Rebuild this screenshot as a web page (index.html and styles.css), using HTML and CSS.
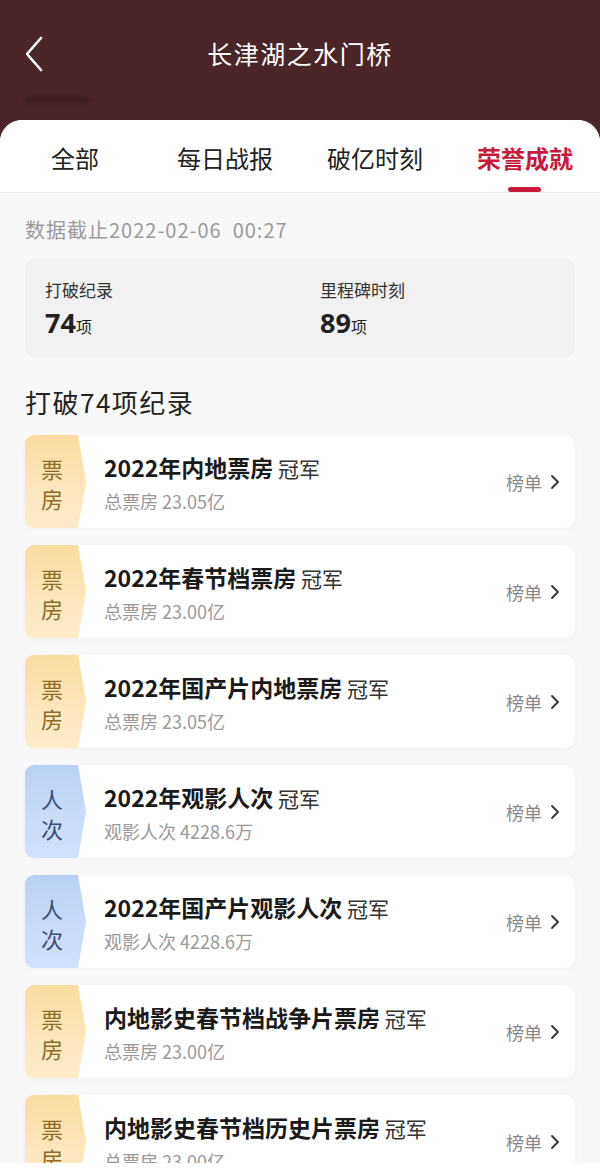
FILE: index.html
```html
<!DOCTYPE html>
<html lang="zh-CN">

<head>
  <meta charset="UTF-8">
  <meta name="viewport" content="width=device-width, initial-scale=1.0">
  <title>长津湖之水门桥</title>
  <link rel="stylesheet" href="styles.css">
</head>

<body>
  <div id="app">
    <div class="header">
      <div class="nav">
        <svg class="back" width="24" height="40" viewBox="0 0 24 40">
          <polyline points="18,4 4,20 18,36" fill="none" stroke="#ffffff" stroke-width="2.6" stroke-linecap="round" stroke-linejoin="round" />
        </svg>
        <div class="nav-title">长津湖之水门桥</div>
      </div>
      <div class="smudge"></div>
    </div>

    <div class="sheet">
      <ul class="tabs">
        <li>全部</li>
        <li>每日战报</li>
        <li>破亿时刻</li>
        <li class="active">荣誉成就</li>
      </ul>

      <div class="content">
        <p class="update">数据截止2022-02-06&nbsp;&nbsp;00:27</p>

        <div class="stats">
          <div class="stat">
            <div class="stat-label">打破纪录</div>
            <div class="stat-value"><b>74</b>项</div>
          </div>
          <div class="stat">
            <div class="stat-label">里程碑时刻</div>
            <div class="stat-value"><b>89</b>项</div>
          </div>
        </div>

        <h2 class="section-title">打破74项纪录</h2>

        <ul class="records">
          <li class="record">
            <div class="tag tag-box">票<br>房</div>
            <div class="record-info">
              <div class="record-name"><b>2022年内地票房</b> 冠军</div>
              <div class="record-sub">总票房 23.05亿</div>
            </div>
            <div class="record-link">榜单 <svg width="10" height="16" viewBox="0 0 10 16"><polyline points="2,2 8,8 2,14" fill="none" stroke="#333" stroke-width="1.8" stroke-linecap="round" stroke-linejoin="round" /></svg></div>
          </li>
          <li class="record">
            <div class="tag tag-box">票<br>房</div>
            <div class="record-info">
              <div class="record-name"><b>2022年春节档票房</b> 冠军</div>
              <div class="record-sub">总票房 23.00亿</div>
            </div>
            <div class="record-link">榜单 <svg width="10" height="16" viewBox="0 0 10 16"><polyline points="2,2 8,8 2,14" fill="none" stroke="#333" stroke-width="1.8" stroke-linecap="round" stroke-linejoin="round" /></svg></div>
          </li>
          <li class="record">
            <div class="tag tag-box">票<br>房</div>
            <div class="record-info">
              <div class="record-name"><b>2022年国产片内地票房</b> 冠军</div>
              <div class="record-sub">总票房 23.05亿</div>
            </div>
            <div class="record-link">榜单 <svg width="10" height="16" viewBox="0 0 10 16"><polyline points="2,2 8,8 2,14" fill="none" stroke="#333" stroke-width="1.8" stroke-linecap="round" stroke-linejoin="round" /></svg></div>
          </li>
          <li class="record">
            <div class="tag tag-people">人<br>次</div>
            <div class="record-info">
              <div class="record-name"><b>2022年观影人次</b> 冠军</div>
              <div class="record-sub">观影人次 4228.6万</div>
            </div>
            <div class="record-link">榜单 <svg width="10" height="16" viewBox="0 0 10 16"><polyline points="2,2 8,8 2,14" fill="none" stroke="#333" stroke-width="1.8" stroke-linecap="round" stroke-linejoin="round" /></svg></div>
          </li>
          <li class="record">
            <div class="tag tag-people">人<br>次</div>
            <div class="record-info">
              <div class="record-name"><b>2022年国产片观影人次</b> 冠军</div>
              <div class="record-sub">观影人次 4228.6万</div>
            </div>
            <div class="record-link">榜单 <svg width="10" height="16" viewBox="0 0 10 16"><polyline points="2,2 8,8 2,14" fill="none" stroke="#333" stroke-width="1.8" stroke-linecap="round" stroke-linejoin="round" /></svg></div>
          </li>
          <li class="record">
            <div class="tag tag-box">票<br>房</div>
            <div class="record-info">
              <div class="record-name"><b>内地影史春节档战争片票房</b> 冠军</div>
              <div class="record-sub">总票房 23.00亿</div>
            </div>
            <div class="record-link">榜单 <svg width="10" height="16" viewBox="0 0 10 16"><polyline points="2,2 8,8 2,14" fill="none" stroke="#333" stroke-width="1.8" stroke-linecap="round" stroke-linejoin="round" /></svg></div>
          </li>
          <li class="record">
            <div class="tag tag-box">票<br>房</div>
            <div class="record-info">
              <div class="record-name"><b>内地影史春节档历史片票房</b> 冠军</div>
              <div class="record-sub">总票房 23.00亿</div>
            </div>
            <div class="record-link">榜单 <svg width="10" height="16" viewBox="0 0 10 16"><polyline points="2,2 8,8 2,14" fill="none" stroke="#333" stroke-width="1.8" stroke-linecap="round" stroke-linejoin="round" /></svg></div>
          </li>
        </ul>
      </div>
    </div>
    <div class="bottom-edge"></div>
  </div>
</body>

</html>
```

FILE: styles.css
```css
* {
  margin: 0;
  padding: 0;
  box-sizing: border-box;
}

li {
  list-style: none;
}

html,
body {
  height: 1170px;
  overflow: hidden;
}

body {
  font-family: "Noto Sans CJK SC", "Noto Sans", sans-serif;
  color: #222222;
  background: #4a2629;
}

#app {
  position: relative;
  height: 1170px;
  overflow: hidden;
}

/* 顶部标题栏 */
.header {
  position: relative;
  height: 120px;
  background: #4a2629;
}

.nav {
  height: 106px;
  display: flex;
  align-items: center;
  justify-content: center;
  position: relative;
}

.back {
  position: absolute;
  left: 23px;
  top: 34px;
}

.nav-title {
  color: #ffffff;
  font-size: 25px;
  letter-spacing: 1.5px;
}

.smudge {
  position: absolute;
  left: 24px;
  top: 97px;
  width: 66px;
  height: 5px;
  border-radius: 3px;
  background: #2e1417;
  filter: blur(2px);
  opacity: 0.7;
}

/* 白色面板 */
.sheet {
  background: #f8f8f8;
  border-radius: 22px 22px 0 0;
  min-height: 1050px;
}

.tabs {
  display: grid;
  grid-template-columns: repeat(4, 1fr);
  height: 73px;
  background: #ffffff;
  border-radius: 22px 22px 0 0;
  border-bottom: 1px solid #eeeeee;
}

.tabs>li {
  position: relative;
  text-align: center;
  font-size: 24px;
  line-height: 34px;
  padding-top: 21px;
  color: #222222;
}

.tabs>li.active {
  color: #c8193c;
  font-weight: bold;
}

.tabs>li.active::after {
  content: "";
  position: absolute;
  left: 50%;
  bottom: 0;
  width: 33px;
  height: 5px;
  margin-left: -17px;
  border-radius: 3px;
  background: #c8193c;
}

.content {
  padding: 0 25px;
}

.update {
  margin-top: 22px;
  line-height: 30px;
  font-size: 20px;
  letter-spacing: 1px;
  color: #9a9a9a;
}

/* 统计 */
.stats {
  display: flex;
  margin-top: 13px;
  height: 100px;
  padding: 20px 20px 0;
  background: #f1f1f1;
  border-radius: 10px;
}

.stat {
  flex: none;
  width: 275px;
}

.stat-label {
  font-size: 17px;
  line-height: 24px;
  color: #333333;
}

.stat-value {
  margin-top: 4px;
  font-size: 16px;
  line-height: 34px;
  color: #222222;
}

.stat-value b {
  font-size: 27px;
  font-family: "Noto Sans", sans-serif;
}

.section-title {
  margin-top: 27px;
  font-size: 26px;
  line-height: 34px;
  letter-spacing: 1.5px;
  font-weight: normal;
  color: #222222;
}

/* 纪录列表 */
.records {
  display: flex;
  flex-direction: column;
  gap: 17px;
  margin-top: 16px;
}

.record {
  display: flex;
  align-items: flex-start;
  height: 93px;
  background: #ffffff;
  border-radius: 10px;
  box-shadow: 0 1px 4px rgba(0, 0, 0, 0.04);
}

.tag {
  flex: none;
  width: 61px;
  height: 93px;
  padding: 18px 7px 0 0;
  border-radius: 9px 6px 6px 9px;
  clip-path: polygon(0 0, 53px 0, 61px 50%, 53px 100%, 0 100%);
  text-align: center;
  font-size: 22px;
  line-height: 30px;
}

.tag-box {
  color: #8d6a26;
  background: linear-gradient(180deg, #fbdc9f 0%, #fde7bd 60%, #fdebc8 100%);
}

.tag-people {
  color: #394d79;
  background: linear-gradient(180deg, #b9d0f6 0%, #cbdcf9 60%, #d2e1fb 100%);
}

.record-info {
  flex: 1;
  padding: 18px 0 0 18px;
}

.record-name {
  font-size: 21px;
  line-height: 28px;
  color: #333333;
  white-space: nowrap;
}

.record-name b {
  font-size: 23px;
  color: #1a1a1a;
}

.record-sub {
  margin-top: 8px;
  font-size: 18px;
  line-height: 22px;
  color: #999999;
}

.record-link {
  flex: none;
  display: flex;
  align-items: center;
  gap: 8px;
  height: 93px;
  padding-right: 15px;
  font-size: 18px;
  color: #888888;
}

.bottom-edge {
  position: absolute;
  left: 0;
  right: 0;
  bottom: 0;
  height: 7px;
  background: #ffffff;
}
```
